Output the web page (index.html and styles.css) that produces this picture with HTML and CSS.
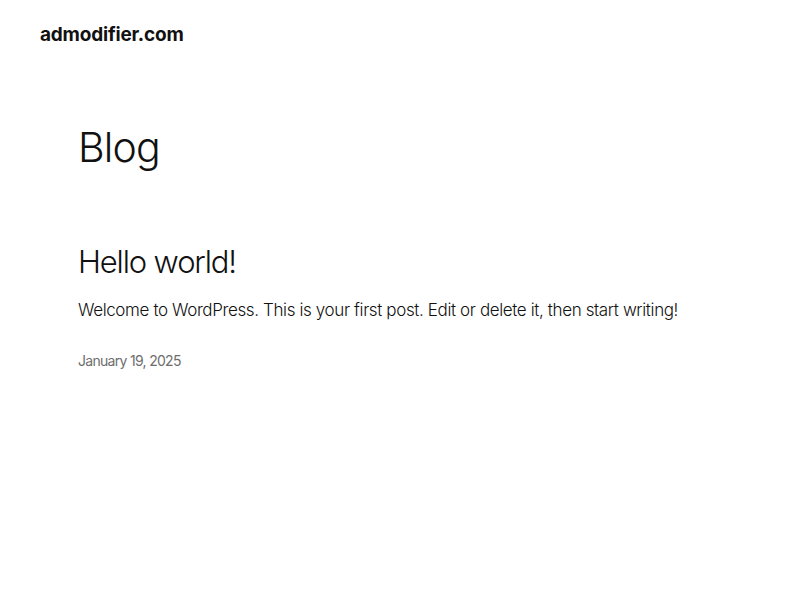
FILE: index.html
```html
<!DOCTYPE html>
<html lang="en">
<head>
<meta charset="utf-8">
<title>Blog – admodifier.com</title>
<link rel="stylesheet" href="styles.css">
</head>
<body>
<header class="site-header">
  <a class="site-title" href="#">admodifier.com</a>
</header>
<main class="main">
  <h1 class="page-title">Blog</h1>
  <article class="post">
    <h2 class="post-title">Hello world!</h2>
    <p class="post-excerpt">Welcome to WordPress. This is your first post. Edit or delete it, then start writing!</p>
    <div class="post-date">January 19, 2025</div>
  </article>
</main>
</body>
</html>
```
FILE: styles.css
```css
html, body {
  margin: 0;
  padding: 0;
  background: #ffffff;
  color: #111111;
  font-family: Inter, "Noto Sans", sans-serif;
}
.site-header {
  padding: 20px 40px 0 40px;
  height: 28px;
  display: flex;
  align-items: center;
}
.site-title {
  font-size: 19px;
  font-weight: 700;
  color: #111111;
  text-decoration: none;
  letter-spacing: -0.2px;
}
.main {
  padding: 0 78px;
}
.page-title {
  margin: 75px 0 0 0;
  font-size: 41px;
  font-weight: 300;
  letter-spacing: -0.8px;
  line-height: 1.2;
}
.post {
  margin-top: 71px;
}
.post-title {
  margin: 0;
  font-size: 31px;
  font-weight: 300;
  letter-spacing: -1.15px;
  line-height: 1.2;
}
.post-excerpt {
  margin: 19px 0 0 0;
  font-size: 17px;
  font-weight: 300;
  letter-spacing: -0.38px;
  line-height: 1.4;
}
.post-date {
  margin-top: 29px;
  font-size: 14px;
  color: #6e6e6e;
  letter-spacing: -0.7px;
}
```
